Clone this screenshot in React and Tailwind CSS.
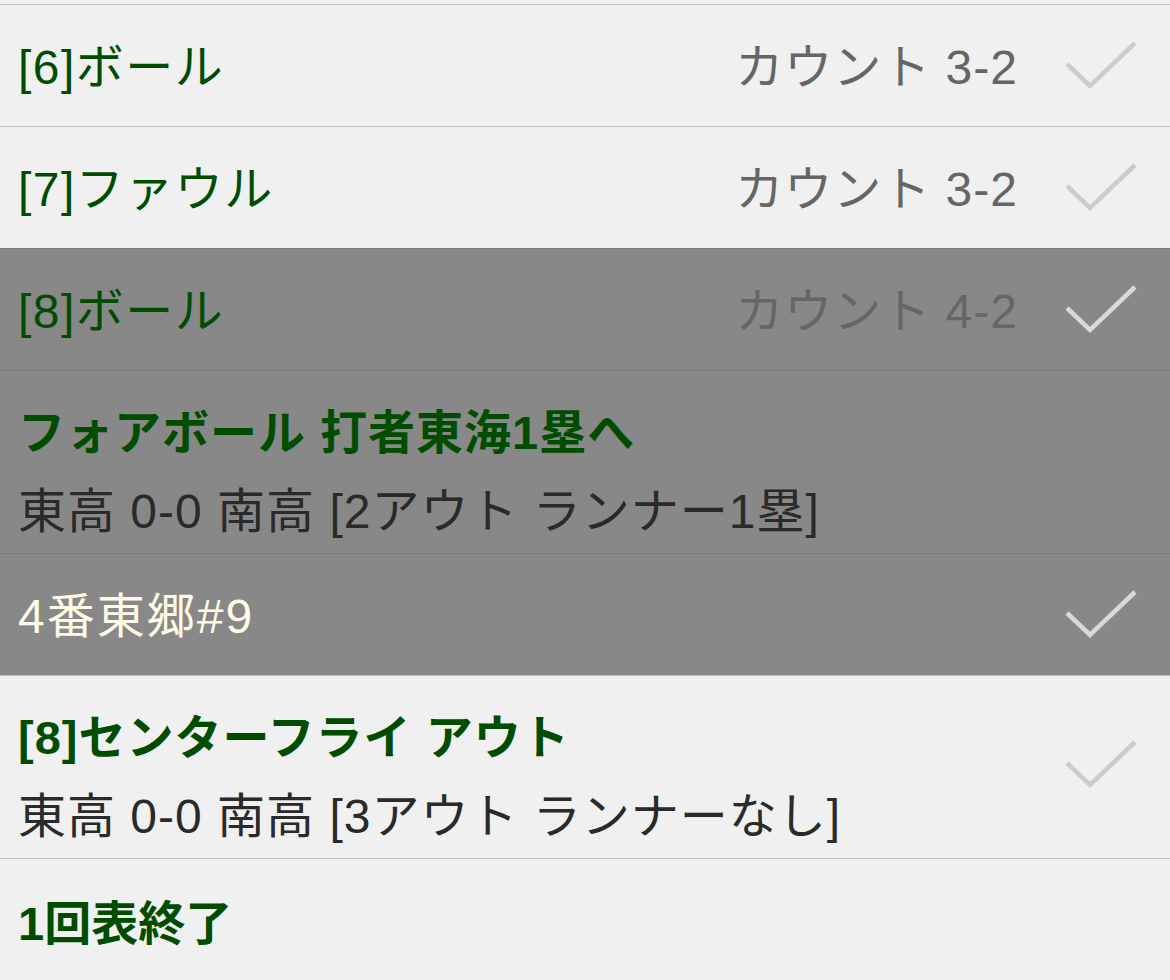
import React from 'react';

const font = { fontFamily: '"Liberation Sans", "Noto Sans CJK JP", sans-serif' };

function Check({ light }) {
  return (
    <svg width="76" height="56" viewBox="0 0 76 56" className="shrink-0">
      <polyline
        points="3,24 26,46 71,3"
        fill="none"
        stroke={light ? '#d9d9d9' : '#cccccc'}
        strokeWidth="4.5"
      />
    </svg>
  );
}

function SimpleRow({ label, count, gray }) {
  return (
    <div
      className={`h-[122px] flex items-center border-t pl-[18px] pr-[30px] pt-[4px] ${
        gray ? 'bg-[#888888] border-[#7a7a7a]' : 'bg-[#f0f0f0] border-[#bdbdbd]'
      }`}
    >
      <div className="flex-1 text-[48px] text-[#004d00] leading-none tracking-[1.5px]">{label}</div>
      <div className="text-[48px] text-[#666666] leading-none tracking-[1px] mr-[46px]">{count}</div>
      <Check light={gray} />
    </div>
  );
}

function EventRow({ title, sub, gray, check }) {
  return (
    <div
      className={`h-[183px] flex items-center border-t pl-[18px] pr-[30px] ${
        gray ? 'bg-[#888888] border-[#7a7a7a]' : 'bg-[#f0f0f0] border-[#bdbdbd]'
      }`}
    >
      <div className="flex-1 flex flex-col gap-[32px] pt-[20px]">
        <div className="text-[47px] font-bold text-[#004d00] leading-none tracking-[1px]">{title}</div>
        <div className="text-[48px] text-[#2a2a2a] leading-none tracking-[1px]">{sub}</div>
      </div>
      {check && <Check light={gray} />}
    </div>
  );
}

export default function App() {
  return (
    <div className="w-[1170px] h-[980px] overflow-hidden bg-[#f0f0f0]" style={font}>
      <div className="h-[4px] bg-[#f0f0f0]" />
      <SimpleRow label="[6]ボール" count="カウント 3-2" />
      <SimpleRow label="[7]ファウル" count="カウント 3-2" />
      <SimpleRow label="[8]ボール" count="カウント 4-2" gray />
      <EventRow title="フォアボール 打者東海1塁へ" sub="東高 0-0 南高 [2アウト ランナー1塁]" gray />
      <div className="h-[122px] flex items-center border-t border-[#7a7a7a] bg-[#888888] pl-[18px] pr-[30px] pt-[4px]">
        <div className="flex-1 text-[48px] text-[#fffbe6] leading-none tracking-[2px]">4番東郷#9</div>
        <Check light />
      </div>
      <EventRow title="[8]センターフライ アウト" sub="東高 0-0 南高 [3アウト ランナーなし]" check />
      <div className="h-[130px] flex items-center border-t border-[#bdbdbd] bg-[#f0f0f0] pl-[18px]">
        <div className="text-[47px] font-bold text-[#004d00] leading-none">1回表終了</div>
      </div>
    </div>
  );
}
